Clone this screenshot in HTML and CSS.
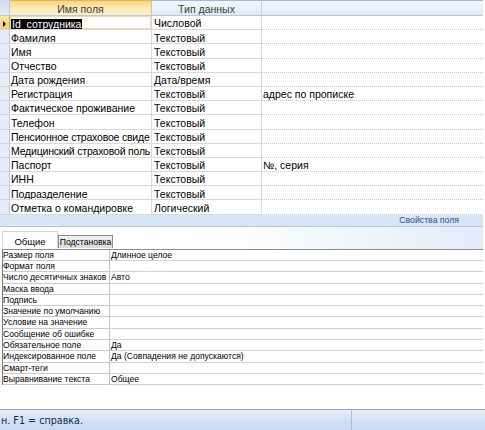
FILE: index.html
```html
<!DOCTYPE html>
<html lang="ru">
<head>
<meta charset="utf-8">
<link rel="stylesheet" href="styles.css">
</head>
<body>
<div class="app">
  <div class="design">
    <div class="row head">
      <div class="sel sel-head"></div>
      <div class="hcell hcell-active">Имя поля</div>
      <div class="hcell">Тип данных</div>
      <div class="hcell hcell-desc"></div>
    </div>
    <div class="row current">
      <div class="sel sel-current"><span class="arrow"></span></div>
      <div class="cell name cell-active"><span class="selected-text">Id&nbsp; сотрудника</span></div>
      <div class="cell type">Числовой</div>
      <div class="cell desc"></div>
    </div>
    <div class="row"><div class="sel"></div><div class="cell name">Фамилия</div><div class="cell type">Текстовый</div><div class="cell desc"></div></div>
    <div class="row"><div class="sel"></div><div class="cell name">Имя</div><div class="cell type">Текстовый</div><div class="cell desc"></div></div>
    <div class="row"><div class="sel"></div><div class="cell name">Отчество</div><div class="cell type">Текстовый</div><div class="cell desc"></div></div>
    <div class="row"><div class="sel"></div><div class="cell name">Дата рождения</div><div class="cell type">Дата/время</div><div class="cell desc"></div></div>
    <div class="row"><div class="sel"></div><div class="cell name">Регистрация</div><div class="cell type">Текстовый</div><div class="cell desc">адрес по прописке</div></div>
    <div class="row"><div class="sel"></div><div class="cell name">Фактическое проживание</div><div class="cell type">Текстовый</div><div class="cell desc"></div></div>
    <div class="row"><div class="sel"></div><div class="cell name">Телефон</div><div class="cell type">Текстовый</div><div class="cell desc"></div></div>
    <div class="row"><div class="sel"></div><div class="cell name tight">Пенсионное страховое свиде</div><div class="cell type">Текстовый</div><div class="cell desc"></div></div>
    <div class="row"><div class="sel"></div><div class="cell name tight">Медицинский страховой поль</div><div class="cell type">Текстовый</div><div class="cell desc"></div></div>
    <div class="row"><div class="sel"></div><div class="cell name">Паспорт</div><div class="cell type">Текстовый</div><div class="cell desc">№, серия</div></div>
    <div class="row"><div class="sel"></div><div class="cell name">ИНН</div><div class="cell type">Текстовый</div><div class="cell desc"></div></div>
    <div class="row"><div class="sel"></div><div class="cell name">Подразделение</div><div class="cell type">Текстовый</div><div class="cell desc"></div></div>
    <div class="row"><div class="sel"></div><div class="cell name">Отметка о командировке</div><div class="cell type">Логический</div><div class="cell desc"></div></div>
  </div>

  <div class="props-title"><span>Свойства поля</span></div>

  <div class="tabstrip">
    <div class="tab tab-active">Общие</div>
    <div class="tab">Подстановка</div>
  </div>

  <div class="props">
    <div class="prow"><div class="plabel">Размер поля</div><div class="pvalue">Длинное целое</div></div>
    <div class="prow"><div class="plabel">Формат поля</div><div class="pvalue"></div></div>
    <div class="prow"><div class="plabel">Число десятичных знаков</div><div class="pvalue">Авто</div></div>
    <div class="prow"><div class="plabel">Маска ввода</div><div class="pvalue"></div></div>
    <div class="prow"><div class="plabel">Подпись</div><div class="pvalue"></div></div>
    <div class="prow"><div class="plabel">Значение по умолчанию</div><div class="pvalue"></div></div>
    <div class="prow"><div class="plabel">Условие на значение</div><div class="pvalue"></div></div>
    <div class="prow"><div class="plabel">Сообщение об ошибке</div><div class="pvalue"></div></div>
    <div class="prow"><div class="plabel">Обязательное поле</div><div class="pvalue">Да</div></div>
    <div class="prow"><div class="plabel">Индексированное поле</div><div class="pvalue">Да (Совпадения не допускаются)</div></div>
    <div class="prow"><div class="plabel">Смарт-теги</div><div class="pvalue"></div></div>
    <div class="prow"><div class="plabel">Выравнивание текста</div><div class="pvalue">Общее</div></div>
  </div>

  <div class="spacer"></div>

  <div class="status">
    <div class="status-text">н. F1 = справка.</div>
    <div class="status-right"></div>
  </div>
</div>
</body>
</html>
```

FILE: styles.css
```css
* { box-sizing: border-box; }

html, body {
  margin: 0;
  padding: 0;
  background: #ffffff;
}

body {
  width: 485px;
  height: 430px;
  overflow: hidden;
  font-family: "Liberation Sans", Arial, sans-serif;
  color: #000;
}

.app {
  display: flex;
  flex-direction: column;
  width: 485px;
  height: 430px;
}

/* ---------- top design grid ---------- */
.design {
  width: 483px;
  display: flex;
  flex-direction: column;
}

.row {
  display: grid;
  grid-template-columns: 10px 142px 110px 221px;
  height: 14.2px;
  font-size: 10.5px;
}

.row.head {
  height: 16px;
}

.sel {
  background: #e6edf6;
  border-right: 1px solid #b9c9dd;
  border-bottom: 1px solid #c9d6e6;
}

.sel-head {
  background: linear-gradient(#cfdcee, #e3ebf6);
  border-bottom: 1px solid #b9c9dd;
}

.sel-current {
  background: linear-gradient(#fbe6a9, #f7cf72);
  border-right: 1px solid #d9a94a;
  display: flex;
  align-items: center;
  padding-left: 3px;
  padding-top: 2px;
}

.arrow {
  width: 0;
  height: 0;
  border-top: 3px solid transparent;
  border-bottom: 3px solid transparent;
  border-left: 3px solid #000;
}

.hcell {
  display: flex;
  align-items: center;
  justify-content: center;
  color: #3c3c3c;
  background: linear-gradient(#f4f8fd, #dfe9f5);
  border-top: 1px solid #9fbadc;
  border-right: 1px solid #c5d3e4;
  border-bottom: 1px solid #b5c7de;
  line-height: 1;
  padding-top: 3px;
}

.hcell-active {
  background: linear-gradient(#f8d684, #fdebb6 55%, #fdf0c8);
  border-top: 1px solid #e9b458;
  border-right: 1px solid #e2c27a;
}

.hcell-desc {
  border-right: none;
}

.cell {
  display: flex;
  align-items: center;
  white-space: nowrap;
  overflow: hidden;
  border-bottom: 1px solid #d9d9d9;
  border-right: 1px solid #d4dbe5;
  line-height: 1;
  padding-top: 2px;
}

.name { padding-left: 1px; }
.tight { letter-spacing: -0.2px; }
.type { padding-left: 2px; }
.desc { padding-left: 1px; border-right: none; border-bottom: 1px dotted #c8c8c8; }

.cell-active {
  box-shadow: inset 0 0 0 1px #f3d9a4;
}

.selected-text {
  background: #000;
  color: #fff;
  display: inline-block;
  height: 10px;
  line-height: 10px;
  padding: 0 1px 0 1px;
}

/* ---------- field properties header ---------- */
.props-title {
  height: 12px;
  width: 483px;
  background: #d8e5f5;
  border-bottom: 1px solid #b4c8e0;
  display: flex;
  justify-content: flex-end;
  align-items: center;
  padding-right: 24px;
  font-size: 8.7px;
  color: #2f4f8f;
}

/* ---------- tabs ---------- */
.tabstrip {
  height: 22px;
  width: 483px;
  background: linear-gradient(to right, #ffffff 0%, #ffffff 45%, #e2ecf8 100%);
  display: flex;
  align-items: flex-end;
  padding-left: 2px;
}

.tab {
  height: 13px;
  padding: 0 2px;
  width: 55px;
  display: flex;
  align-items: center;
  justify-content: center;
  font-size: 8.6px;
  background: linear-gradient(#f0f0f0, #dcdcdc);
  border: 1px solid #8c8c8c;
  border-bottom: none;
  margin-bottom: 1px;
  color: #000;
}

.tab-active {
  height: 18px;
  width: 56px;
  background: #ffffff;
  border: 1px solid #d4d4d4;
  border-bottom: none;
  margin-bottom: 0;
  font-size: 9.5px;
  padding-top: 3px;
}

/* ---------- properties grid ---------- */
.props {
  margin-left: 2px;
  width: 481px;
  border-left: 1px solid #7a7a7a;
  border-top: 1px solid #8e8e8e;
  display: flex;
  flex-direction: column;
}

.prow {
  display: grid;
  grid-template-columns: 107px 1fr;
  height: 11.3px;
  font-size: 8.6px;
}

.plabel {
  border-right: 1px solid #c3c3c3;
  border-bottom: 1px solid #c9c9c9;
  white-space: nowrap;
  overflow: hidden;
  line-height: 10px;
  padding-left: 0;
}

.pvalue {
  border-bottom: 1px solid #d2d2d2;
  white-space: nowrap;
  padding-left: 1px;
  line-height: 10px;
}

.spacer {
  flex: 1;
}

/* ---------- status bar ---------- */
.status {
  height: 21px;
  border-top: 1px solid #9aa6b4;
  background: linear-gradient(#e3edf9, #cfe0f5 60%, #c6daf3);
  display: flex;
  align-items: center;
}

.status-text {
  width: 352px;
  font-family: "DejaVu Sans", Verdana, sans-serif;
  font-size: 9.6px;
  color: #15294b;
  padding-left: 1px;
  border-right: 1px solid #a9bcd6;
  height: 100%;
  display: flex;
  align-items: center;
}

.status-right {
  flex: 1;
}
```
